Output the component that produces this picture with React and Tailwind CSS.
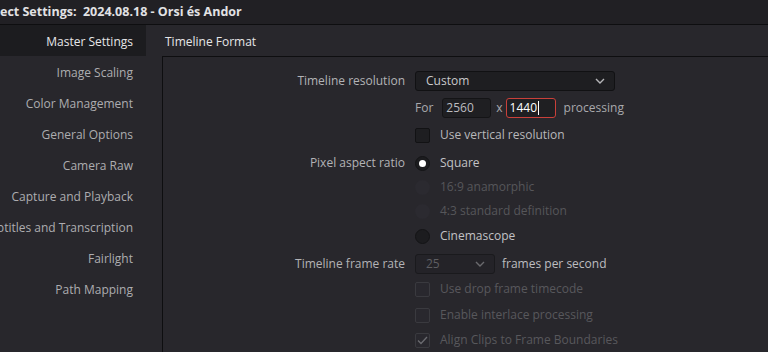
const sections = [
  'Master Settings',
  'Image Scaling',
  'Color Management',
  'General Options',
  'Camera Raw',
  'Capture and Playback',
  'Subtitles and Transcription',
  'Fairlight',
  'Path Mapping',
];

function Chevron({ dim }) {
  return (
    <svg width="10" height="6" viewBox="0 0 10 6" className="shrink-0">
      <path d="M1 1 L5 5 L9 1" fill="none" stroke={dim ? '#6a6a6e' : '#b5b5b8'} strokeWidth="1.4" />
    </svg>
  );
}

function Checkbox({ disabled, checked }) {
  return (
    <div
      className={`flex h-[15px] w-[15px] shrink-0 items-center justify-center rounded-[2px] border ${
        disabled ? 'border-[#3a3a3f] bg-[#29282e]' : 'border-[#121214] bg-[#1e1e21]'
      }`}
    >
      {checked && (
        <svg width="11" height="9" viewBox="0 0 11 9">
          <path d="M1 4.5 L4 7.5 L10 1" fill="none" stroke="#6b6b70" strokeWidth="1.3" />
        </svg>
      )}
    </div>
  );
}

function Radio({ disabled, selected }) {
  return (
    <div
      className={`flex h-[15px] w-[15px] shrink-0 items-center justify-center rounded-full ${
        disabled ? 'bg-[#2b2a30]' : 'border border-[#141416] bg-[#1c1c1f]'
      }`}
    >
      {selected && <div className="h-[7px] w-[7px] rounded-full bg-white" />}
    </div>
  );
}

function Row({ label, mt, children }) {
  return (
    <div className={`flex h-[20px] items-center ${mt}`}>
      <div className="w-[242px] shrink-0 text-right text-[#b3b3b6]">{label}</div>
      <div className="ml-[10px] flex items-center">{children}</div>
    </div>
  );
}

export default function App() {
  return (
    <div
      className="h-[352px] w-[768px] overflow-hidden bg-[#28272c] text-[12px]"
      style={{ fontFamily: '"Open Sans", "Liberation Sans", sans-serif' }}
    >
      <div className="flex h-[25px] items-center border-b border-[#0e0e10] bg-[#212024] whitespace-pre text-[12.5px] font-bold text-[#e2e2e4]">
        {'ect Settings:  2024.08.18 - Orsi és Andor'}
      </div>

      <div className="flex">
        <div className="w-[146px] shrink-0">
          {sections.map((s, i) => (
            <div
              key={s}
              className={`flex h-[31px] items-center justify-end whitespace-nowrap pt-[2px] pr-[13px] ${
                i === 0 ? 'bg-[#1c1c1f] text-[#e6e6e8]' : 'text-[#adadb0]'
              }`}
            >
              {s}
            </div>
          ))}
        </div>

        <div className="flex-1">
          <div className="flex h-[31px] items-center pt-[2px] pl-[19px] text-[#e6e6e8]">Timeline Format</div>
          <div className="ml-[16px] h-[300px] border-l border-t border-[#0e0e10] pt-[14px]">
            <Row label="Timeline resolution" mt="mt-0">
              <div className="flex h-[20px] w-[200px] items-center justify-between rounded-[3px] border border-[#111113] bg-[#1e1e21] pl-[10px] pr-[9px] text-[#c9c9cc]">
                <span>Custom</span>
                <Chevron />
              </div>
            </Row>
            <Row label="" mt="mt-[7px]">
              <span className="text-[#a9a9ac]">For</span>
              <div className="ml-[9px] flex h-[20px] w-[49px] items-center rounded-[3px] border border-[#141416] bg-[#1f1f22] pl-[3px] text-[#bdbdc0]">
                2560
              </div>
              <span className="ml-[5px] text-[#a9a9ac]">x</span>
              <div className="ml-[3px] flex h-[20px] w-[50px] items-center rounded-[3px] border border-[#c9403a] bg-[#1f1f22] pl-[3px] text-white">
                1440
                <span className="ml-[1px] h-[14px] w-px bg-white" />
              </div>
              <span className="ml-[8px] text-[#a9a9ac]">processing</span>
            </Row>
            <Row label="" mt="mt-[7px]">
              <Checkbox />
              <span className="ml-[10px] text-[#b8b8bb]">Use vertical resolution</span>
            </Row>
            <Row label="Pixel aspect ratio" mt="mt-[8px]">
              <Radio selected />
              <span className="ml-[10px] text-[#c2c2c5]">Square</span>
            </Row>
            <Row label="" mt="mt-[4px]">
              <Radio disabled />
              <span className="ml-[10px] text-[#56565a]">16:9 anamorphic</span>
            </Row>
            <Row label="" mt="mt-[4px]">
              <Radio disabled />
              <span className="ml-[10px] text-[#56565a]">4:3 standard definition</span>
            </Row>
            <Row label="" mt="mt-[5px]">
              <Radio />
              <span className="ml-[10px] text-[#c2c2c5]">Cinemascope</span>
            </Row>
            <Row label="Timeline frame rate" mt="mt-[8px]">
              <div className="flex h-[20px] w-[80px] items-center justify-between rounded-[3px] border border-[#1a1a1d] bg-[#242328] pl-[10px] pr-[9px] text-[#5e5e62]">
                <span>25</span>
                <Chevron dim />
              </div>
              <span className="ml-[7px] text-[#bdbdc0]">frames per second</span>
            </Row>
            <Row label="" mt="mt-[5px]">
              <Checkbox disabled />
              <span className="ml-[10px] text-[#58585c]">Use drop frame timecode</span>
            </Row>
            <Row label="" mt="mt-[6px]">
              <Checkbox disabled />
              <span className="ml-[10px] text-[#58585c]">Enable interlace processing</span>
            </Row>
            <Row label="" mt="mt-[5px]">
              <Checkbox disabled checked />
              <span className="ml-[10px] text-[#58585c]">Align Clips to Frame Boundaries</span>
            </Row>
          </div>
        </div>
      </div>
    </div>
  );
}
